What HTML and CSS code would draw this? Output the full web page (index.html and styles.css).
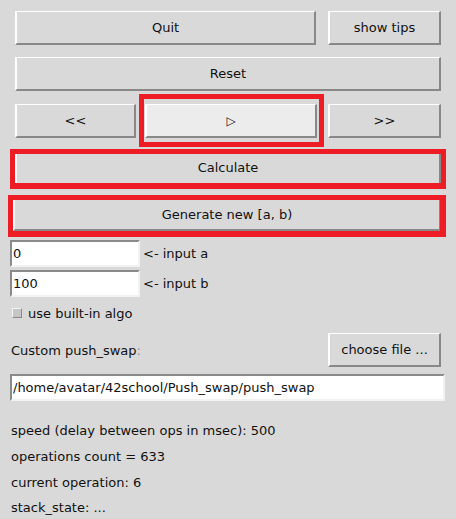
FILE: index.html
```html
<!DOCTYPE html>
<html>
<head>
<meta charset="utf-8">
<link rel="stylesheet" href="styles.css">
</head>
<body>
<div class="app">
  <div class="row row1">
    <div class="btn grow">Quit</div>
    <div class="btn tips">show tips</div>
  </div>
  <div class="row row2">
    <div class="btn grow">Reset</div>
  </div>
  <div class="row row3">
    <div class="btn nav-left">&lt;&lt;</div>
    <div class="mark mark-play">
      <div class="btn play">▷</div>
    </div>
    <div class="btn nav-right">&gt;&gt;</div>
  </div>
  <div class="mark mark-calc">
    <div class="inner-btn calc">Calculate</div>
  </div>
  <div class="mark mark-gen">
    <div class="inner-btn gen">Generate new [a, b)</div>
  </div>
  <div class="field-row first">
    <div class="entry small">0</div>
    <span class="lbl">&lt;- input a</span>
  </div>
  <div class="field-row">
    <div class="entry small">100</div>
    <span class="lbl">&lt;- input b</span>
  </div>
  <div class="check-row">
    <span class="indicator"></span>
    <span class="lbl">use built-in algo</span>
  </div>
  <div class="custom-row">
    <span class="custom-lbl">Custom push_swap<span class="faint">:</span></span>
    <div class="btn tips">choose file ...</div>
  </div>
  <div class="entry path">/home/avatar/42school/Push_swap/push_swap</div>
  <div class="info">
    <div class="line">speed (delay between ops in msec): 500</div>
    <div class="line">operations count = 633</div>
    <div class="line">current operation: 6</div>
    <div class="line">stack_state: ...</div>
  </div>
</div>
</body>
</html>
```
FILE: styles.css
```css
html, body {
  margin: 0;
  padding: 0;
  background: #d9d9d9;
}
body {
  font-family: "DejaVu Sans", sans-serif;
  font-size: 13px;
  color: #111;
  width: 456px;
  height: 519px;
  overflow: hidden;
}
.app {
  padding: 11px 15px 0 15px;
}
.row {
  display: flex;
}
.btn {
  box-sizing: border-box;
  height: 34px;
  display: flex;
  align-items: center;
  justify-content: center;
  background: #d9d9d9;
  border-style: solid;
  border-width: 1px 2px 2px 2px;
  border-color: #ffffff #888888 #888888 #ffffff;
  white-space: nowrap;
}
.grow { flex: 1; }
.row1 { gap: 12px; }
.tips { width: 113px; }
.row2 { margin-top: 12px; }
.row3 {
  margin-top: 3px;
  align-items: flex-start;
}
.nav-left { width: 121px; margin-top: 10px; }
.nav-right { width: 113px; margin-top: 10px; margin-left: 4px; }
.mark {
  box-sizing: border-box;
  border: 5px solid #ee1c25;
}
.mark-play {
  width: 185px;
  margin-left: 3px;
  padding: 5px 2px 4px 1px;
}
.play {
  width: 172px;
  background: #ececec;
  font-size: 12px;
}
.inner-btn {
  box-sizing: border-box;
  display: flex;
  align-items: center;
  justify-content: center;
  background: #d9d9d9;
  border-style: solid;
  border-color: #ffffff #888888 #888888 #ffffff;
}
.mark-calc {
  margin: 2px -5px 0 -5px;
  border-bottom-width: 6px;
}
.calc {
  height: 29px;
  border-width: 0 2px 0 2px;
  padding-bottom: 2px;
}
.mark-gen {
  margin: 6px -5px 0 -7px;
  border-right-width: 6px;
  border-bottom-width: 6px;
}
.gen {
  height: 31px;
  border-width: 0 1px 2px 2px;
}
.entry {
  box-sizing: border-box;
  background: #ffffff;
  border-style: solid;
  border-width: 2px;
  border-color: #8a8a8a #f2f2f2 #f2f2f2 #8a8a8a;
  height: 27px;
  padding: 0 1px;
  display: flex;
  align-items: center;
  white-space: nowrap;
}
.field-row {
  display: flex;
  align-items: center;
  margin-left: -5px;
  margin-top: 3px;
  gap: 3px;
}
.field-row.first { margin-top: 3px; }
.small { width: 130px; }
.check-row {
  display: flex;
  align-items: center;
  height: 22px;
  margin-top: 5px;
  margin-left: -3px;
  gap: 6px;
}
.indicator {
  box-sizing: border-box;
  width: 10px;
  height: 10px;
  background: #c6c6c6;
  border-style: solid;
  border-width: 1px;
  border-color: #f4f4f4 #888888 #888888 #f4f4f4;
}
.custom-row {
  display: flex;
  align-items: center;
  justify-content: space-between;
  margin-top: 9px;
}
.custom-lbl { margin-left: -4px; }
.faint { color: #8c8c8c; }
.path {
  margin: 7px -4px 0 -5px;
}
.info {
  margin-top: 17px;
  margin-left: -4px;
}
.line {
  height: 25.7px;
  display: flex;
  align-items: center;
}
```
